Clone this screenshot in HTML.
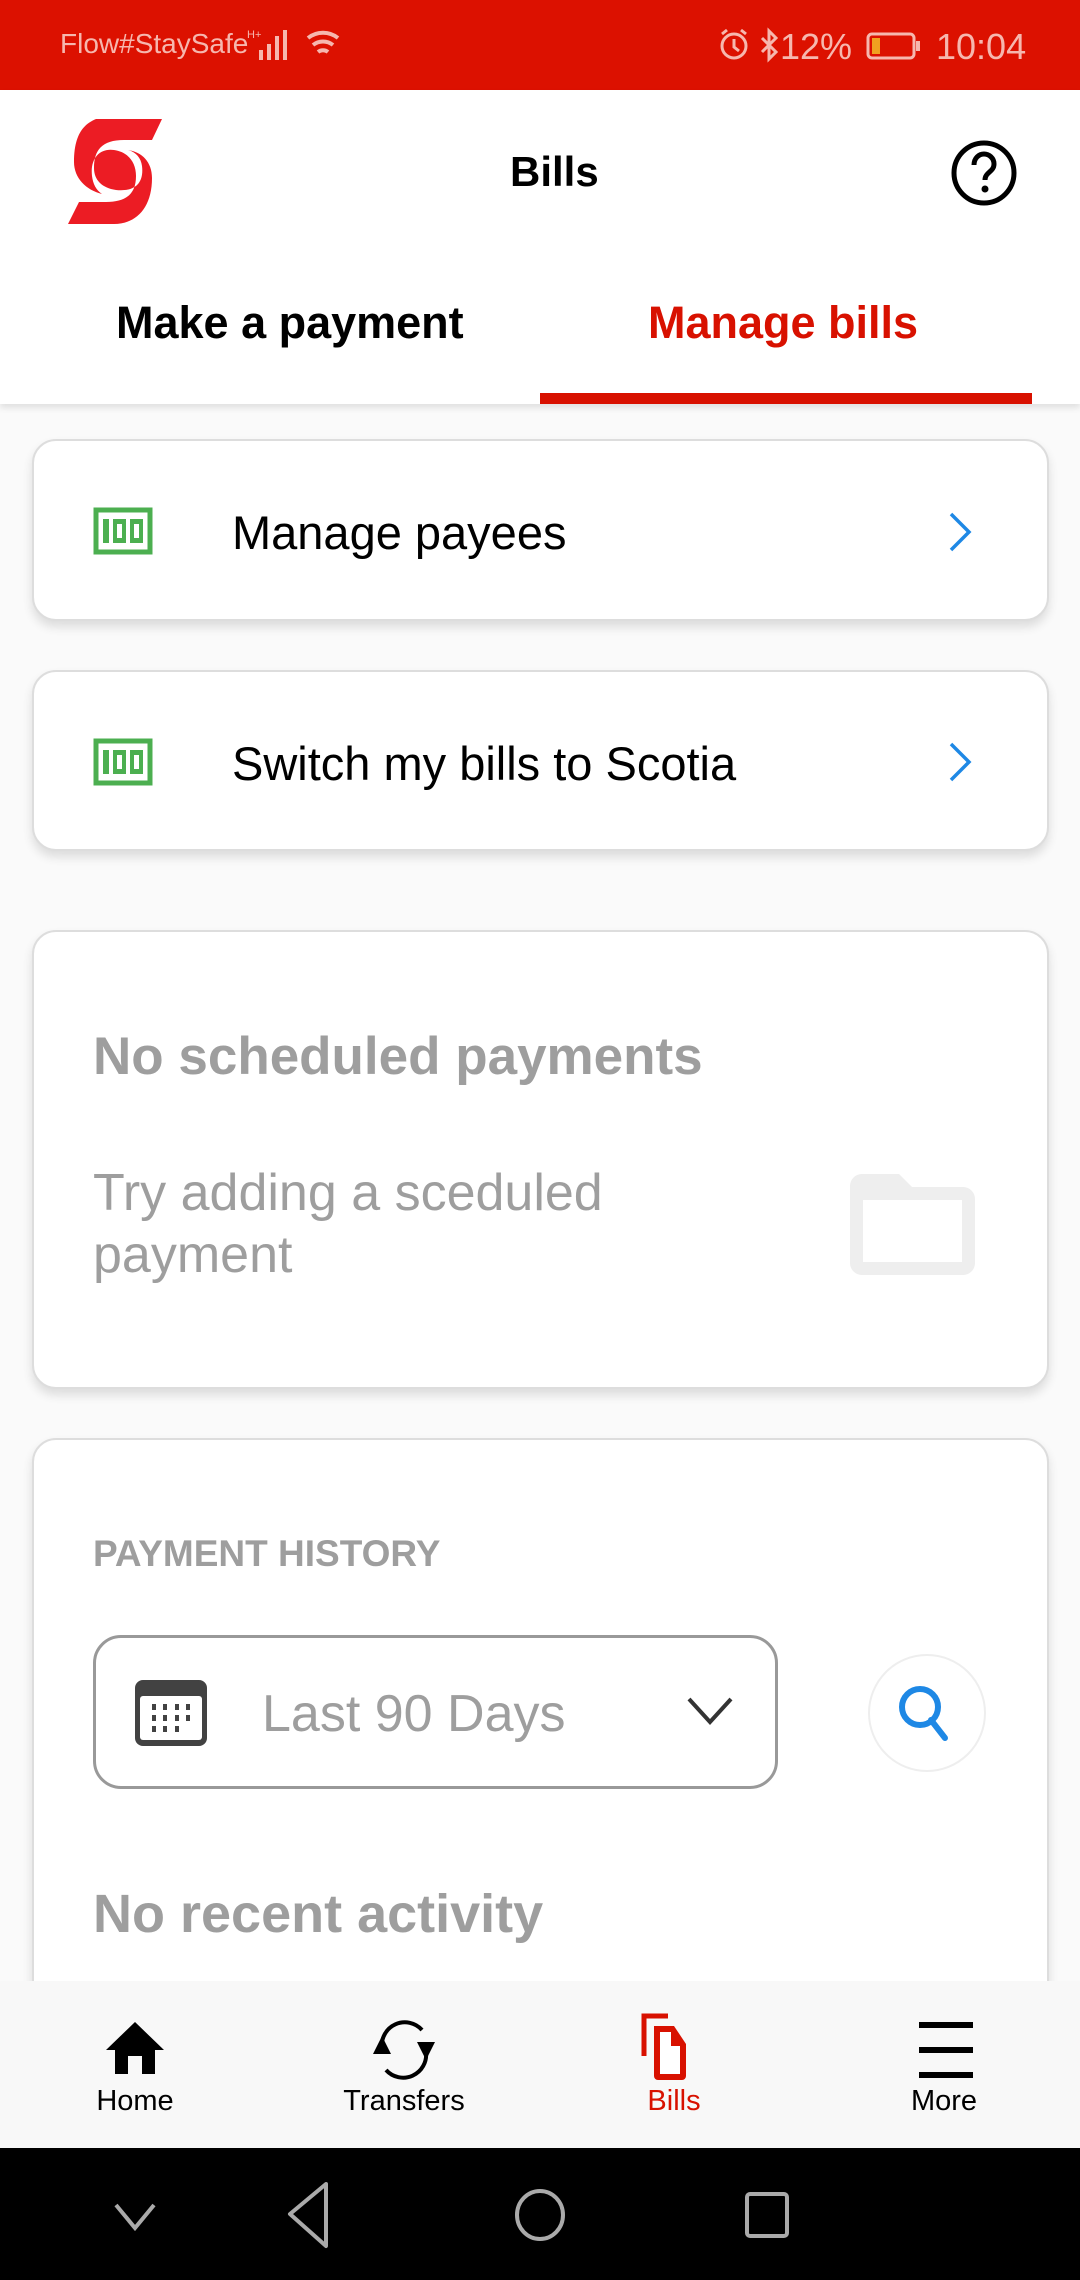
<!DOCTYPE html>
<html><head><meta charset="utf-8"><style>
*{margin:0;padding:0;box-sizing:border-box}
body{width:1080px;height:2280px;position:relative;overflow:hidden;background:#fafafa;font-family:"Liberation Sans",Arial,sans-serif;color:#000}
.a{position:absolute}
.card{position:absolute;left:32px;width:1017px;background:#fff;border:2px solid #ddd;border-radius:24px;box-shadow:0 6px 10px rgba(0,0,0,0.12)}
.t{position:absolute;white-space:nowrap;line-height:1}
</style></head><body>
<!-- status bar -->
<div class="a" style="left:0;top:0;width:1080px;height:90px;background:#dc1100"></div>
<div class="t" style="left:60px;top:30px;font-size:28px;color:#f6b7ae">Flow#StaySafe</div>
<svg class="a" style="left:245px;top:26px" width="105" height="36" viewBox="0 0 105 36"><g fill="#f6b7ae"><rect x="14" y="24" width="4" height="10"/><rect x="22" y="18" width="4" height="16"/><rect x="30" y="10" width="4" height="24"/><rect x="38" y="4" width="4" height="30"/><text x="2" y="12" font-size="11" font-family="Liberation Sans">H+</text></g><g fill="none" stroke="#f6b7ae" stroke-width="4"><path d="M63 12a24 24 0 0 1 30 0M68 19a16 16 0 0 1 20 0M73 26a8 8 0 0 1 10 0"/></g></svg>
<svg class="a" style="left:718px;top:26px" width="310" height="40" viewBox="0 0 310 40"><g fill="none" stroke="#f6b7ae" stroke-width="3"><circle cx="16" cy="20" r="12"/><path d="M16 13v8l5 4M4 8l5-4M28 8l-5-4"/><path d="M44 12l14 14-7 7V5l7 7-14 14"/><rect x="150" y="8" width="46" height="24" rx="4"/></g><rect x="154" y="12" width="8" height="16" fill="#f0a020"/><rect x="198" y="15" width="4" height="10" fill="#f6b7ae"/><text x="62" y="33" font-size="36" fill="#f6b7ae" font-family="Liberation Sans">12%</text><text x="218" y="33" font-size="36" fill="#f6b7ae" font-family="Liberation Sans">10:04</text></svg>
<!-- header -->
<div class="a" style="left:0;top:90px;width:1080px;height:314px;background:#fff;box-shadow:0 4px 6px rgba(0,0,0,0.1)"></div>
<svg class="a" style="left:66px;top:118px" width="98" height="108" viewBox="0 0 98 108"><path d="M30 1H96L86 22H58C36 22 28 32 28 50 28 62 36 70 50 72 70 74 78 64 76 48 75 40 70 34 62 32 76 34 86 44 86 60 86 90 70 106 48 106H2L13 84H40C60 84 70 76 70 58 70 44 62 34 48 32 34 30 24 40 26 58 27 66 30 72 36 76 20 72 8 60 8 44 8 16 18 6 30 1Z" fill="#ec1c24"/></svg>
<div class="t" style="left:510px;top:151px;font-size:42px;font-weight:bold">Bills</div>
<svg class="a" style="left:950px;top:139px" width="68" height="68" viewBox="0 0 68 68"><circle cx="34" cy="34" r="30" fill="none" stroke="#000" stroke-width="5"/><path d="M24 26c0-7 5-11 10-11s10 4 10 10c0 8-9 8-9 16" fill="none" stroke="#000" stroke-width="5"/><circle cx="35" cy="50" r="3.5"/></svg>
<div class="t" style="left:116px;top:300px;font-size:45px;font-weight:bold">Make a payment</div>
<div class="t" style="left:648px;top:300px;font-size:45px;font-weight:bold;color:#d81100">Manage bills</div>
<div class="a" style="left:540px;top:393px;width:492px;height:11px;background:#d81100"></div>
<!-- cards -->
<div class="card" style="top:439px;height:182px"></div>
<svg class="a" style="left:93px;top:507px" width="60" height="48" viewBox="0 0 60 48"><rect x="3" y="3" width="54" height="42" fill="none" stroke="#4caf50" stroke-width="5"/><g fill="#4caf50"><rect x="10" y="12" width="6" height="24"/><rect x="20" y="12" width="13" height="24"/><rect x="37" y="12" width="13" height="24"/></g><g fill="#fff"><rect x="24" y="17" width="5" height="14"/><rect x="41" y="17" width="5" height="14"/></g></svg>
<div class="t" style="left:232px;top:509px;font-size:47px">Manage payees</div>
<svg class="a" style="left:945px;top:510px" width="30" height="44" viewBox="0 0 30 44"><path d="M6 4l18 18-18 18" fill="none" stroke="#1e88e5" stroke-width="3.5"/></svg>
<div class="card" style="top:670px;height:181px"></div>
<svg class="a" style="left:93px;top:738px" width="60" height="48" viewBox="0 0 60 48"><rect x="3" y="3" width="54" height="42" fill="none" stroke="#4caf50" stroke-width="5"/><g fill="#4caf50"><rect x="10" y="12" width="6" height="24"/><rect x="20" y="12" width="13" height="24"/><rect x="37" y="12" width="13" height="24"/></g><g fill="#fff"><rect x="24" y="17" width="5" height="14"/><rect x="41" y="17" width="5" height="14"/></g></svg>
<div class="t" style="left:232px;top:740px;font-size:47px">Switch my bills to Scotia</div>
<svg class="a" style="left:945px;top:740px" width="30" height="44" viewBox="0 0 30 44"><path d="M6 4l18 18-18 18" fill="none" stroke="#1e88e5" stroke-width="3.5"/></svg>
<div class="card" style="top:930px;height:459px"></div>
<div class="t" style="left:93px;top:1030px;font-size:53px;font-weight:bold;color:#9e9e9e">No scheduled payments</div>
<div class="t" style="left:93px;top:1162px;font-size:52px;color:#9e9e9e;line-height:62px;white-space:normal;width:620px">Try adding a sceduled payment</div>
<svg class="a" style="left:850px;top:1174px" width="126" height="102" viewBox="0 0 126 102"><path d="M12 0H49L62 13H113A12 12 0 0 1 125 25V89A12 12 0 0 1 113 101H12A12 12 0 0 1 0 89V12A12 12 0 0 1 12 0ZM13 26V88H112V26Z" fill="#eee" fill-rule="evenodd"/></svg>
<div class="card" style="top:1438px;height:700px"></div>
<div class="t" style="left:93px;top:1535px;font-size:37px;font-weight:bold;color:#9e9e9e">PAYMENT HISTORY</div>
<div class="a" style="left:93px;top:1635px;width:685px;height:154px;border:3px solid #999;border-radius:28px;background:#fff"></div>
<svg class="a" style="left:135px;top:1680px" width="72" height="66" viewBox="0 0 72 66"><rect x="0" y="0" width="72" height="66" rx="8" fill="#424242"/><rect x="5" y="16" width="62" height="44" rx="3" fill="#fff"/><g fill="#424242"><rect x="17" y="24" width="4" height="6"/><rect x="28" y="24" width="4" height="6"/><rect x="40" y="24" width="4" height="6"/><rect x="51" y="24" width="4" height="6"/><rect x="17" y="35" width="4" height="6"/><rect x="28" y="35" width="4" height="6"/><rect x="40" y="35" width="4" height="6"/><rect x="51" y="35" width="4" height="6"/><rect x="17" y="46" width="4" height="6"/><rect x="28" y="46" width="4" height="6"/><rect x="40" y="46" width="4" height="6"/></g></svg>
<div class="t" style="left:262px;top:1688px;font-size:52px;color:#9e9e9e">Last 90 Days</div>
<svg class="a" style="left:686px;top:1696px" width="48" height="30" viewBox="0 0 48 30"><path d="M3 3l21 23 21-23" fill="none" stroke="#333" stroke-width="4"/></svg>
<div class="a" style="left:868px;top:1654px;width:118px;height:118px;border:2px solid #eee;border-radius:50%"></div>
<svg class="a" style="left:895px;top:1682px" width="62" height="62" viewBox="0 0 62 62"><circle cx="25" cy="25" r="18" fill="none" stroke="#1e88e5" stroke-width="6"/><path d="M36 38l14 18" stroke="#1e88e5" stroke-width="6" stroke-linecap="round"/></svg>
<div class="t" style="left:93px;top:1887px;font-size:54px;font-weight:bold;color:#9e9e9e">No recent activity</div>
<!-- bottom nav -->
<div class="a" style="left:0;top:1981px;width:1080px;height:167px;background:#f8f8f8"></div>
<svg class="a" style="left:104px;top:2020px" width="62" height="56" viewBox="0 0 62 56"><path d="M31 2L2 30H11V54H24V36H38V54H51V30H60Z"/></svg>
<svg class="a" style="left:364px;top:2014px" width="80" height="72" viewBox="0 0 80 72"><path d="M18 34A23 23 0 0 1 58 16M62 38A23 23 0 0 1 22 56" fill="none" stroke="#000" stroke-width="4"/><path d="M9 40L18 22 27 40Z"/><path d="M53 28L62 46 71 28Z"/></svg>
<svg class="a" style="left:640px;top:2012px" width="66" height="72" viewBox="0 0 66 72"><path d="M4 44V4H28" fill="none" stroke="#d81100" stroke-width="5"/><path d="M14 14H34L46 32V64A4 4 0 0 1 42 68H18A4 4 0 0 1 14 64Z" fill="#d81100"/><path d="M20 20H31V34H40V62H20Z" fill="#fff"/></svg>
<svg class="a" style="left:917px;top:2022px" width="56" height="56" viewBox="0 0 56 56"><rect x="2" y="0" width="54" height="6"/><rect x="2" y="25" width="54" height="6"/><rect x="2" y="50" width="54" height="6"/></svg>
<div class="t" style="left:135px;top:2087px;font-size:29px;transform:translateX(-50%)">Home</div>
<div class="t" style="left:404px;top:2087px;font-size:29px;transform:translateX(-50%)">Transfers</div>
<div class="t" style="left:674px;top:2087px;font-size:29px;color:#d81100;transform:translateX(-50%)">Bills</div>
<div class="t" style="left:944px;top:2087px;font-size:29px;transform:translateX(-50%)">More</div>
<!-- system nav -->
<div class="a" style="left:0;top:2148px;width:1080px;height:132px;background:#000"></div>
<svg class="a" style="left:0;top:2148px" width="1080" height="132" viewBox="0 0 1080 132"><g fill="none" stroke="#aaa" stroke-width="4"><path d="M116 57l19 23 19-23"/><path d="M326 36L290 66 326 98Z" stroke-linejoin="round"/><ellipse cx="540" cy="67" rx="23" ry="24"/><rect x="747" y="46" width="40" height="42" rx="3"/></g></svg>
</body></html>
